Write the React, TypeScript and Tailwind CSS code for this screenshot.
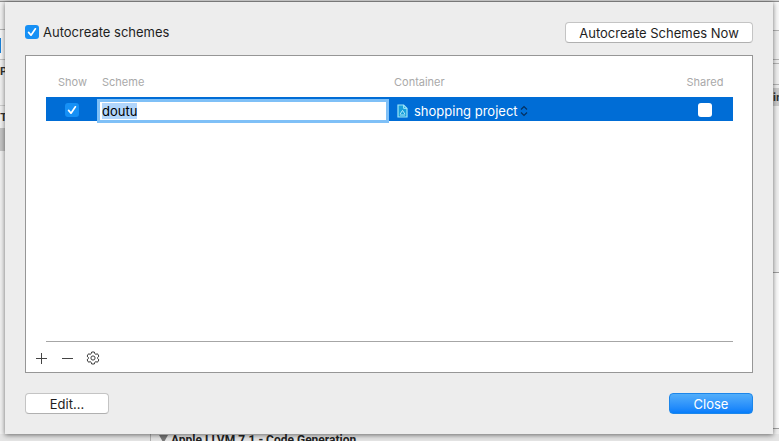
import { useEffect, useRef, useState } from 'react';
import type { ReactNode } from 'react';

interface CheckBoxProps {
  label: string;
  checked: boolean;
  onChange: (checked: boolean) => void;
  className: string;
}

function CheckBox({ label, checked, onChange, className }: CheckBoxProps) {
  return (
    <span className="grid h-[14px] w-[14px] shrink-0">
      <input
        type="checkbox"
        aria-label={label}
        checked={checked}
        onChange={(e) => onChange(e.target.checked)}
        className={`col-start-1 row-start-1 h-[14px] w-[14px] appearance-none rounded-[3px] ${className}`}
      />
      {checked && (
        <svg viewBox="0 0 14 14" className="pointer-events-none col-start-1 row-start-1 h-[14px] w-[14px]">
          <path
            d="M3.6 7.4 6 10.2 10.4 3.8"
            fill="none"
            stroke="#fff"
            strokeWidth="1.7"
            strokeLinecap="round"
            strokeLinejoin="round"
          />
        </svg>
      )}
    </span>
  );
}

function ProjectIcon() {
  return (
    <svg viewBox="0 0 11 14" className="h-[14px] w-[11px] shrink-0">
      <path d="M1 1h5.6L10 4.4V13H1z" fill="#18a0dc" stroke="#9fe6f8" strokeWidth="1.2" />
      <path d="M6.6 1v3.4H10" fill="none" stroke="#9fe6f8" />
      <path d="M3 10.2 5.5 6.4 8 10.2M3 11h5" fill="none" stroke="#c4f1fb" strokeWidth="0.9" />
    </svg>
  );
}

function Arrows() {
  return (
    <svg viewBox="0 0 8 12" className="pointer-events-none ml-[2px] h-3 w-2 shrink-0">
      <path d="M1 4.5 4 1.5 7 4.5M1 7.5 4 10.5 7 7.5" fill="none" stroke="#05305f" strokeWidth="1.2" />
    </svg>
  );
}

function ToolButton({ label, children }: { label: string; children: ReactNode }) {
  return (
    <button type="button" aria-label={label} className="flex h-4 w-4 items-center justify-center">
      {children}
    </button>
  );
}

// Edges of the project window that stay visible around the sheet
function LeftEdge() {
  return (
    <div className="w-[5px] shrink-0 overflow-hidden bg-[#f1f1f1] text-[11px] leading-3 font-bold text-[#333]">
      <div className="h-7 border-b border-[#b4b4b4]" />
      <div className="h-[30px] border-b border-[#c4c4c4] bg-[#f7f7f7] pt-2">
        <div className="h-[15px] w-px bg-[#1a80d8]" />
      </div>
      <div className="h-[46px] border-b border-[#cfcfcf] pt-[5px]">P</div>
      <div className="h-[22px] pt-[5px]">T</div>
      <div className="h-[23px] bg-[#c4c4c4]" />
    </div>
  );
}

function RightEdge() {
  return (
    <div className="flex w-[6px] shrink-0 flex-col overflow-hidden bg-[#efefef] text-[11px] leading-[18px] font-bold text-[#333]">
      <div className="h-[29px] border-b border-[#b4b4b4] bg-[#f8f8f8]" />
      <div className="h-[29px] border-b border-[#b4b4b4]" />
      <div className="h-1 border-b border-[#b4b4b4]" />
      <div className="h-[21px] border-b border-[#b4b4b4]" />
      <div className="mt-[3px] h-[18px] bg-[#cbcbcb]">in</div>
      <div className="h-[167px] border-b border-[#a0a0a0]" />
      <div className="flex-1 border-b border-[#a0a0a0] bg-[#fafafa]" />
      <div className="h-[5px]" />
    </div>
  );
}

function BottomEdge() {
  return (
    <div className="flex h-[7px] shrink-0 overflow-hidden bg-[#e4e4e4]">
      <div className="ml-[150px] flex flex-1 items-start border-l border-[#b0b0b0]">
        <svg viewBox="0 0 9 7" className="mt-px ml-2 h-[7px] w-[9px]">
          <path d="M0 0h9L4.5 8z" fill="#777" />
        </svg>
        <span className="ml-[3px] font-['Roboto',sans-serif] text-xs leading-3 font-bold whitespace-nowrap text-[#222]">
          Apple LLVM 7.1 - Code Generation
        </span>
      </div>
    </div>
  );
}

export default function App() {
  const [autocreate, setAutocreate] = useState(true);
  const [show, setShow] = useState(true);
  const [shared, setShared] = useState(false);
  const [name, setName] = useState('doutu');
  const nameRef = useRef<HTMLInputElement>(null);

  useEffect(() => {
    nameRef.current?.focus();
    nameRef.current?.select();
  }, []);

  return (
    <div className="flex h-screen flex-col overflow-hidden bg-[#e4e4e4] font-['Inter','Liberation_Sans',sans-serif] text-[13px] leading-4 text-[#1e1e1e]">
      <div className="h-[2px] shrink-0 border-b border-[#8f8f8f] bg-[#d4d4d4]" />
      <div className="flex flex-1">
        <LeftEdge />
        <main className="z-10 flex min-w-0 flex-1 flex-col bg-[#ededed] p-5 shadow-[0_1px_5px_rgba(0,0,0,0.55)]">
          <div className="flex items-start justify-between">
            <label className="mt-[2px] flex items-center gap-1">
              <CheckBox
                label="Autocreate schemes"
                checked={autocreate}
                onChange={setAutocreate}
                className="bg-[#1690f5]"
              />
              Autocreate schemes
            </label>
            <button
              type="button"
              className="h-[21px] w-[188px] rounded border border-[#c4c4c4] border-b-[#b0b0b0] bg-white"
            >
              Autocreate Schemes Now
            </button>
          </div>

          <section className="mt-3 flex flex-1 flex-col border border-[#969696] bg-white">
            <div className="flex-1 pr-[19px] pl-5">
              <table className="w-full table-fixed border-collapse text-left">
                <thead className="text-[11px] text-[#a9a9a9]">
                  <tr className="h-[41px]">
                    <th className="w-[51px] pt-[11px] pl-[2px] text-center font-normal">Show</th>
                    <th className="w-[292px] pt-[11px] pl-[5px] font-normal">Scheme</th>
                    <th className="pt-[11px] pl-[5px] font-normal">Container</th>
                    <th className="w-14 pt-[11px] text-center font-normal">Shared</th>
                  </tr>
                </thead>
                <tbody>
                  <tr className="h-6 bg-[#006dd6] text-white">
                    <td className="p-0">
                      <div className="flex justify-center pt-[2px]">
                        <CheckBox label="Show" checked={show} onChange={setShow} className="bg-[#1690f5]" />
                      </div>
                    </td>
                    <td className="p-0">
                      {/* the focus ring hangs a little below the row */}
                      <input
                        ref={nameRef}
                        type="text"
                        aria-label="Scheme name"
                        value={name}
                        onChange={(e) => setName(e.target.value)}
                        className="mt-[2px] -mb-[2px] block h-6 w-full border-3 border-[#7fc0f7] bg-white pl-[2px] text-black outline-none selection:bg-[#b1d6fc] selection:text-black"
                      />
                    </td>
                    <td className="p-0">
                      <div className="flex items-center pt-1 pl-2">
                        <ProjectIcon />
                        <select
                          aria-label="Container"
                          className="ml-[6px] field-sizing-content appearance-none bg-transparent p-0 outline-none"
                        >
                          <option>shopping project</option>
                        </select>
                        <Arrows />
                      </div>
                    </td>
                    <td className="p-0">
                      <div className="flex justify-center pt-[2px]">
                        <CheckBox label="Shared" checked={shared} onChange={setShared} className="bg-white" />
                      </div>
                    </td>
                  </tr>
                </tbody>
              </table>
            </div>
            <div className="mr-[19px] ml-5 border-t border-[#a6a6a6]" />
            <div className="flex h-[30px] items-center gap-[10px] pt-[2px] pl-[7px]">
              <ToolButton label="Add">
                <svg viewBox="0 0 11 11" className="h-[11px] w-[11px]">
                  <path d="M0 5.5h11M5.5 0v11" stroke="#444" />
                </svg>
              </ToolButton>
              <ToolButton label="Remove">
                <svg viewBox="0 0 11 11" className="h-[11px] w-[11px]">
                  <path d="M0 5.5h11" stroke="#444" />
                </svg>
              </ToolButton>
              <ToolButton label="Actions">
                <svg viewBox="0 0 14 14" className="h-[14px] w-[14px]">
                  <path
                    d="M5.7 1h2.6l.5 1.7 1 .6 1.7-.5 1.4 2.3-1.2 1.2v1.4l1.2 1.2-1.4 2.3-1.7-.5-1 .6L8.3 13H5.7l-.5-1.7-1-.6-1.7.5-1.4-2.3 1.2-1.2V6.3L1.1 5.1l1.4-2.3 1.7.5 1-.6z"
                    fill="none"
                    stroke="#3c3c3c"
                    strokeLinejoin="round"
                  />
                  <circle cx="7" cy="7" r="2.1" fill="none" stroke="#3c3c3c" />
                </svg>
              </ToolButton>
            </div>
          </section>

          <div className="mt-5 flex justify-between">
            <button
              type="button"
              className="h-[21px] w-[84px] rounded border border-[#c4c4c4] border-b-[#b0b0b0] bg-white"
            >
              Edit...
            </button>
            <button
              type="button"
              className="h-[21px] w-[84px] rounded border border-[#1c86ea] bg-linear-to-b from-[#52aefa] to-[#047dfb] text-white"
            >
              Close
            </button>
          </div>
        </main>
        <RightEdge />
      </div>
      <BottomEdge />
    </div>
  );
}
